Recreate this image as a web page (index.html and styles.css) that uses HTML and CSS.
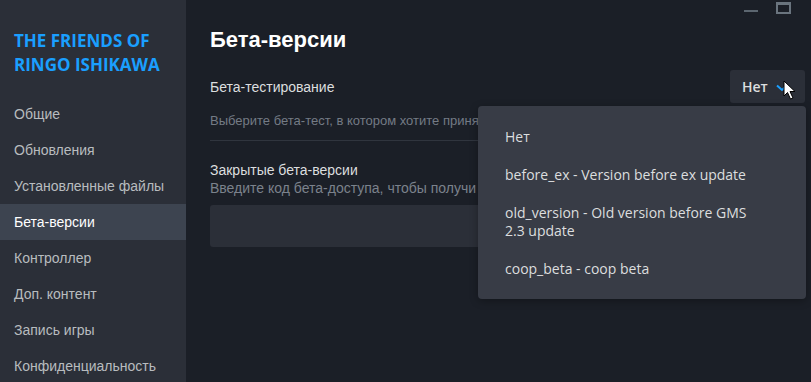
FILE: index.html
```html
<!DOCTYPE html>
<html lang="ru">
<head>
    <meta charset="UTF-8">
    <title>Бета-версии</title>
    <link rel="stylesheet" href="styles.css">
</head>
<body>
<div class="app">
    <!-- боковое меню -->
    <div class="sidebar">
        <div class="game-title">THE FRIENDS OF<br>RINGO ISHIKAWA</div>
        <div class="nav">
            <div class="nav-item">Общие</div>
            <div class="nav-item">Обновления</div>
            <div class="nav-item">Установленные файлы</div>
            <div class="nav-item active">Бета-версии</div>
            <div class="nav-item">Контроллер</div>
            <div class="nav-item">Доп. контент</div>
            <div class="nav-item">Запись игры</div>
            <div class="nav-item">Конфиденциальность</div>
        </div>
    </div>
    <!-- основная часть -->
    <div class="main">
        <h1 class="page-title">Бета-версии</h1>
        <div class="row">
            <div class="label">Бета-тестирование</div>
            <div class="select">
                <span>Нет</span>
                <svg class="chevron" width="12" height="8" viewBox="0 0 12 8">
                    <path d="M1 1.5 L6 6 L11 1.5" fill="none" stroke="#1a9fff" stroke-width="2"/>
                </svg>
            </div>
        </div>
        <!-- остаток строки закрыт выпадающим списком -->
        <div class="hint">Выберите бета-тест, в котором хотите приня</div>
        <div class="sep"></div>
        <div class="label closed">Закрытые бета-версии</div>
        <div class="hint2">Введите код бета-доступа, чтобы получи</div>
        <div class="code-input"></div>

        <div class="dropdown">
            <div class="dd-item">Нет</div>
            <div class="dd-item">before_ex - Version before ex update</div>
            <div class="dd-item">old_version - Old version before GMS<br>2.3 update</div>
            <div class="dd-item">coop_beta - coop beta</div>
        </div>
    </div>
    <!-- кнопки окна -->
    <div class="win-btns">
        <span class="win-min"></span>
        <span class="win-max"></span>
    </div>
    <svg class="cursor" width="14" height="21" viewBox="0 0 14 21">
        <path d="M1 1 L1 16 L4.5 12.5 L7.5 19 L10 18 L7 11.5 L12 11.5 Z" fill="#fff" stroke="#000" stroke-width="1"/>
    </svg>
</div>
</body>
</html>
```

FILE: styles.css
```css
*{
    padding: 0;
    margin: 0;
    box-sizing: border-box;
}
body{
    background: #1b1f27;
    font-family: "Liberation Sans", Arial, sans-serif;
    overflow: hidden;
}
.app{
    position: relative;
    display: flex;
    width: 811px;
    height: 382px;
}
.sidebar{
    width: 186px;
    flex-shrink: 0;
    background: #2b2f38;
    padding-top: 29px;
}
.game-title{
    font-family: "Open Sans", sans-serif;
    font-weight: 700;
    font-size: 17px;
    line-height: 24px;
    color: #1a9fff;
    padding-left: 14px;
    margin-bottom: 19px;
}
.nav-item{
    height: 36px;
    line-height: 36px;
    padding-left: 14px;
    font-size: 14px;
    color: #b8bcbf;
}
.nav-item.active{
    background: #3d4450;
    color: #ffffff;
}
.main{
    position: relative;
    flex: 1;
    padding: 27px 6px 0 24px;
}
.page-title{
    font-size: 22px;
    line-height: 26px;
    font-weight: 700;
    color: #ffffff;
}
.row{
    display: flex;
    justify-content: space-between;
    align-items: center;
    margin-top: 17px;
}
.label{
    font-size: 14px;
    color: #dcdedf;
}
.select{
    display: flex;
    align-items: center;
    gap: 8px;
    width: 75px;
    height: 33px;
    padding-left: 12px;
    background: #2b2f38;
    border-radius: 3px;
    font-family: "Open Sans", sans-serif;
    font-size: 14px;
    font-weight: 600;
    color: #dcdedf;
}
.chevron{
    margin-top: 2px;
}
.hint{
    margin-top: 9px;
    line-height: 18px;
    font-size: 13px;
    color: #747b85;
    white-space: nowrap;
}
.sep{
    margin-top: 10px;
    height: 1px;
    background: #30353e;
}
.closed{
    margin-top: 20px;
    line-height: 18px;
}
.hint2{
    line-height: 18px;
    font-size: 14px;
    color: #7b828c;
    white-space: nowrap;
}
.code-input{
    margin-top: 8px;
    height: 42px;
    background: #2b2f38;
    border-radius: 3px;
}
.dropdown{
    position: absolute;
    left: 292px;
    top: 106px;
    width: 328px;
    height: 193px;
    padding: 18px 27px 0;
    background: #383c46;
    border-radius: 4px;
    font-family: "Open Sans", sans-serif;
    font-weight: 500;
    font-size: 14px;
    line-height: 18px;
    color: #dcdedf;
    box-shadow: 0 2px 8px rgba(0,0,0,0.3);
}
.dd-item{
    padding: 4px 0;
    margin-bottom: 12px;
}
.win-btns{
    position: absolute;
    top: 2px;
    right: 20px;
    display: flex;
    align-items: center;
    gap: 18px;
}
.win-min{
    width: 14px;
    height: 2px;
    background: #5c6670;
    margin-top: 5px;
}
.win-max{
    width: 15px;
    height: 12px;
    border: 2px solid #6a747e;
    border-top-width: 3px;
}
.cursor{
    position: absolute;
    left: 783px;
    top: 80px;
}
```
